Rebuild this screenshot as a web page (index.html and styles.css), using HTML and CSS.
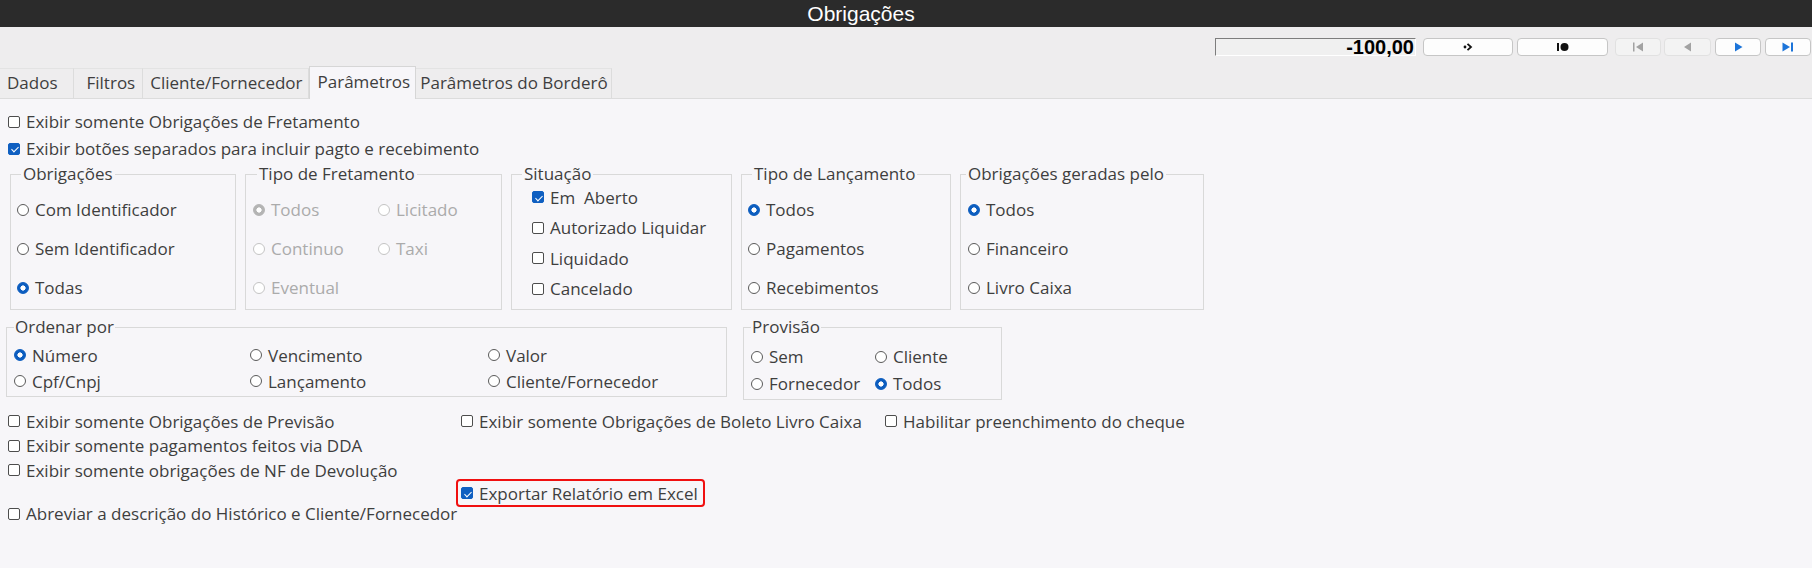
FILE: index.html
```html
<!DOCTYPE html>
<html lang="pt-BR">
<head>
  <meta charset="UTF-8" />
  <title>Obrigações</title>
  <link rel="stylesheet" href="styles.css">
</head>
<body>
  <header class="titlebar">Obrigações</header>

  <div class="toolbar">
    <div class="value-box">-100,00</div>
    <button class="nav-btn wide">
      <svg width="10" height="10" viewBox="0 0 10 10"><circle cx="2" cy="5" r="1.4" fill="#111"/><path d="M4.5 1.8 L8 5 L4.5 8.2" fill="none" stroke="#111" stroke-width="1.8"/></svg>
    </button>
    <button class="nav-btn wide wide2">
      <svg width="12" height="10" viewBox="0 0 12 10"><rect x="0" y="1" width="2" height="8" fill="#111"/><circle cx="7.5" cy="5" r="4" fill="#111"/></svg>
    </button>
    <button class="nav-btn off first">
      <svg width="11" height="10" viewBox="0 0 11 10"><rect x="0" y="0.5" width="1.5" height="9" fill="#a2a2a2"/><path d="M10 0.5 L3 5 L10 9.5Z" fill="#a2a2a2"/></svg>
    </button>
    <button class="nav-btn off prev">
      <svg width="9" height="10" viewBox="0 0 9 10"><path d="M8 0.5 L1 5 L8 9.5Z" fill="#a2a2a2"/></svg>
    </button>
    <button class="nav-btn">
      <svg width="9" height="10" viewBox="0 0 9 10"><path d="M1 0.5 L8.5 5 L1 9.5Z" fill="#1c74d9"/></svg>
    </button>
    <button class="nav-btn">
      <svg width="12" height="10" viewBox="0 0 12 10"><path d="M0.5 0.5 L8 5 L0.5 9.5Z" fill="#1c74d9"/><rect x="9" y="0.5" width="2" height="9" fill="#1c74d9"/></svg>
    </button>
  </div>

  <nav class="tabs">
    <div class="tab tab-dados">Dados</div>
    <div class="tab tab-filtros">Filtros</div>
    <div class="tab">Cliente/Fornecedor</div>
    <div class="tab active">Parâmetros</div>
    <div class="tab tab-bordero">Parâmetros do Borderô</div>
  </nav>

  <main class="panel">
    <label class="check"><span class="box"></span>Exibir somente Obrigações de Fretamento</label>
    <label class="check"><span class="box on"></span>Exibir botões separados para incluir pagto e recebimento</label>

    <div class="groups">
      <fieldset class="group g-obrig">
        <legend>Obrigações</legend>
        <div class="rows-39">
          <label class="check"><span class="radio"></span>Com Identificador</label>
          <label class="check"><span class="radio"></span>Sem Identificador</label>
          <label class="check"><span class="radio on"></span>Todas</label>
        </div>
      </fieldset>

      <fieldset class="group g-frete">
        <legend>Tipo de Fretamento</legend>
        <div class="rows-39 grid-frete">
          <label class="check disabled"><span class="radio on"></span>Todos</label>
          <label class="check disabled"><span class="radio"></span>Licitado</label>
          <label class="check disabled"><span class="radio"></span>Continuo</label>
          <label class="check disabled"><span class="radio"></span>Taxi</label>
          <label class="check disabled"><span class="radio"></span>Eventual</label>
        </div>
      </fieldset>

      <fieldset class="group g-sit">
        <legend>Situação</legend>
        <div class="rows-30">
          <label class="check"><span class="box on"></span>Em&nbsp; Aberto</label>
          <label class="check"><span class="box"></span>Autorizado Liquidar</label>
          <label class="check"><span class="box"></span>Liquidado</label>
          <label class="check"><span class="box"></span>Cancelado</label>
        </div>
      </fieldset>

      <fieldset class="group g-lanc">
        <legend>Tipo de Lançamento</legend>
        <div class="rows-39">
          <label class="check"><span class="radio on"></span>Todos</label>
          <label class="check"><span class="radio"></span>Pagamentos</label>
          <label class="check"><span class="radio"></span>Recebimentos</label>
        </div>
      </fieldset>

      <fieldset class="group g-gerada">
        <legend>Obrigações geradas pelo</legend>
        <div class="rows-39">
          <label class="check"><span class="radio on"></span>Todos</label>
          <label class="check"><span class="radio"></span>Financeiro</label>
          <label class="check"><span class="radio"></span>Livro Caixa</label>
        </div>
      </fieldset>
    </div>

    <div class="groups groups-2">
      <fieldset class="group g-ordem">
        <legend>Ordenar por</legend>
        <div class="grid-ordem">
          <label class="check"><span class="radio on"></span>Número</label>
          <label class="check"><span class="radio"></span>Vencimento</label>
          <label class="check"><span class="radio"></span>Valor</label>
          <label class="check"><span class="radio"></span>Cpf/Cnpj</label>
          <label class="check"><span class="radio"></span>Lançamento</label>
          <label class="check"><span class="radio"></span>Cliente/Fornecedor</label>
        </div>
      </fieldset>

      <fieldset class="group g-prov">
        <legend>Provisão</legend>
        <div class="grid-prov">
          <label class="check"><span class="radio"></span>Sem</label>
          <label class="check"><span class="radio"></span>Cliente</label>
          <label class="check"><span class="radio"></span>Fornecedor</label>
          <label class="check"><span class="radio on"></span>Todos</label>
        </div>
      </fieldset>
    </div>

    <div class="options">
      <div class="opt-col col-1">
        <label class="check"><span class="box"></span>Exibir somente Obrigações de Previsão</label>
        <label class="check"><span class="box"></span>Exibir somente pagamentos feitos via DDA</label>
        <label class="check"><span class="box"></span>Exibir somente obrigações de NF de Devolução</label>
        <label class="check abreviar"><span class="box"></span>Abreviar a descrição do Histórico e Cliente/Fornecedor</label>
      </div>
      <div class="opt-col col-2">
        <label class="check"><span class="box"></span>Exibir somente Obrigações de Boleto Livro Caixa</label>
        <label class="check highlight"><span class="box on"></span>Exportar Relatório em Excel</label>
      </div>
      <div class="opt-col">
        <label class="check"><span class="box"></span>Habilitar preenchimento do cheque</label>
      </div>
    </div>
  </main>
</body>
</html>
```

FILE: styles.css
```css
* {
  box-sizing: border-box;
}
html, body {
  margin: 0;
}
body {
  width: 1812px;
  height: 568px;
  overflow: hidden;
  background: #eeedee;
  font-family: "Open Sans", sans-serif;
  font-size: 17px;
  color: #3e3e3e;
}

/* title + toolbar */
.titlebar {
  height: 27px;
  background: #2b2b2b;
  color: #fff;
  font-family: "Liberation Sans", Arial, sans-serif;
  font-size: 21px;
  line-height: 27px;
  text-align: center;
  padding-right: 90px;
}
.toolbar {
  height: 41px;
  display: flex;
  justify-content: flex-end;
  align-items: flex-start;
  padding: 11px 1px 0 0;
}
.value-box {
  width: 201px;
  height: 18px;
  margin-right: 7px;
  background: #f0f0f0;
  border-top: 1px solid #7d7d7d;
  border-left: 1px solid #7d7d7d;
  border-right: 1px solid #fff;
  border-bottom: 1px solid #fff;
  font-family: "Liberation Sans", Arial, sans-serif;
  font-weight: bold;
  font-size: 20px;
  line-height: 17px;
  text-align: right;
  color: #000;
  padding-right: 1px;
}
.nav-btn {
  width: 46px;
  height: 18px;
  margin-left: 4px;
  padding: 0;
  border: 1px solid #c6c6c6;
  border-radius: 4px;
  background: #fdfdfd;
  display: flex;
  align-items: center;
  justify-content: center;
}
.nav-btn.wide {
  width: 90px;
  margin-left: 0;
}
.nav-btn.wide2 {
  width: 91px;
  margin-left: 4px;
}
.nav-btn.off {
  background: #f3f3f3;
  border-color: #e1e1e1;
}
.nav-btn.first {
  margin-left: 7px;
}
.nav-btn.prev {
  width: 47px;
  margin-left: 3px;
}

/* tabs */
.tabs {
  display: flex;
  height: 30px;
  align-items: flex-end;
}
.tab {
  height: 30px;
  line-height: 28px;
  padding: 0 5px 0 7px;
  border-top: 1px solid #e3e3e3;
  border-right: 1px solid #dcdcdc;
  white-space: nowrap;
}
.tab-dados {
  padding-right: 15px;
}
.tab-filtros {
  padding: 0 7px 0 13px;
}
.tab-bordero {
  padding: 0 3px 0 4px;
}
.tab.active {
  position: relative;
  z-index: 1;
  height: 33px;
  line-height: 29px;
  margin-bottom: -1px;
  padding: 0 5px 0 8px;
  background: #f7f6f9;
  border: 1px solid #d6d6d6;
  border-bottom: none;
}

/* panel */
.panel {
  height: 470px;
  background: #f7f6f9;
  border-top: 1px solid #dcdcdc;
  padding: 9px 8px 0;
}
.check {
  display: flex;
  align-items: center;
  gap: 6px;
  height: 27px;
  white-space: nowrap;
}
.check.disabled {
  color: #ababab;
}
.box {
  position: relative;
  flex: none;
  width: 12px;
  height: 12px;
  border: 1px solid #4d4d4d;
  border-radius: 2px;
  background: #fff;
}
.box.on {
  background: #0f5fc1;
  border-color: #0f5fc1;
}
.box.on::after {
  content: "";
  position: absolute;
  left: 3.5px;
  top: 1.5px;
  width: 3px;
  height: 6px;
  border: solid #fff;
  border-width: 0 1.3px 1.3px 0;
  transform: rotate(45deg);
}
.radio {
  flex: none;
  width: 12px;
  height: 12px;
  border: 1px solid #5a5a5a;
  border-radius: 50%;
  background: #fff;
}
.radio.on {
  border-color: #0c5dbf;
  background: radial-gradient(circle, #fff 0 2.3px, #0c5dbf 2.9px);
}
.disabled .radio {
  border-color: #c4c4c4;
}
.disabled .radio.on {
  border-color: #b4b4b4;
  background: radial-gradient(circle, #fff 0 2.3px, #b4b4b4 2.9px);
}

/* group boxes */
.groups {
  display: flex;
  gap: 9px;
  margin-top: 2px;
  margin-left: 2px;
}
.group {
  margin: 0;
  min-width: 0;
  border: 1px solid #d9d9d9;
  padding: 6px 6px 2px;
}
.group legend {
  line-height: 20px;
  padding: 0 2px;
  margin-left: 4px;
}
.rows-39 .check {
  height: 39px;
}
.rows-30 {
  margin-top: -2px;
}
.rows-30 .check {
  height: 30.5px;
}
.g-obrig {
  width: 226px;
}
.g-frete {
  width: 257px;
  padding-left: 7px;
}
.g-frete legend {
  margin-left: 4px;
}
.grid-frete {
  display: grid;
  grid-template-columns: 125px auto;
}
.g-sit {
  width: 221px;
  padding: 0 6px 2px 20px;
}
.g-sit legend {
  margin-left: -10px;
}
.g-lanc {
  width: 210px;
}
.g-lanc legend {
  margin-left: 4px;
}
.g-gerada {
  width: 244px;
  padding-left: 7px;
}
.g-gerada legend {
  margin-left: -2px;
}

.groups-2 {
  gap: 16px;
  margin-top: 7px;
  margin-left: -2px;
  align-items: flex-start;
}
.g-ordem {
  width: 721px;
  padding: 5px 0 2px 7px;
}
.g-ordem legend,
.g-prov legend {
  margin-left: 0;
  padding: 0 1px;
}
.grid-ordem {
  display: grid;
  grid-template-columns: 236px 238px auto;
}
.grid-ordem .check {
  height: 26px;
}
.g-prov {
  width: 259px;
  padding: 6px 0 2px 7px;
}
.grid-prov {
  display: grid;
  grid-template-columns: 124px auto;
}

/* bottom options */
.options {
  display: flex;
  margin-top: 9px;
}
.opt-col {
  display: flex;
  flex-direction: column;
}
.opt-col .check {
  height: 24.5px;
}
.col-1 {
  width: 453px;
}
.col-2 {
  width: 424px;
}
.check.abreviar {
  margin-top: 19px;
}
.check.highlight {
  align-self: flex-start;
  height: 28px;
  margin: 45.5px 0 0 -5px;
  padding: 0 5px 0 3px;
  border: 2px solid #f01010;
  border-radius: 4px;
}
```
